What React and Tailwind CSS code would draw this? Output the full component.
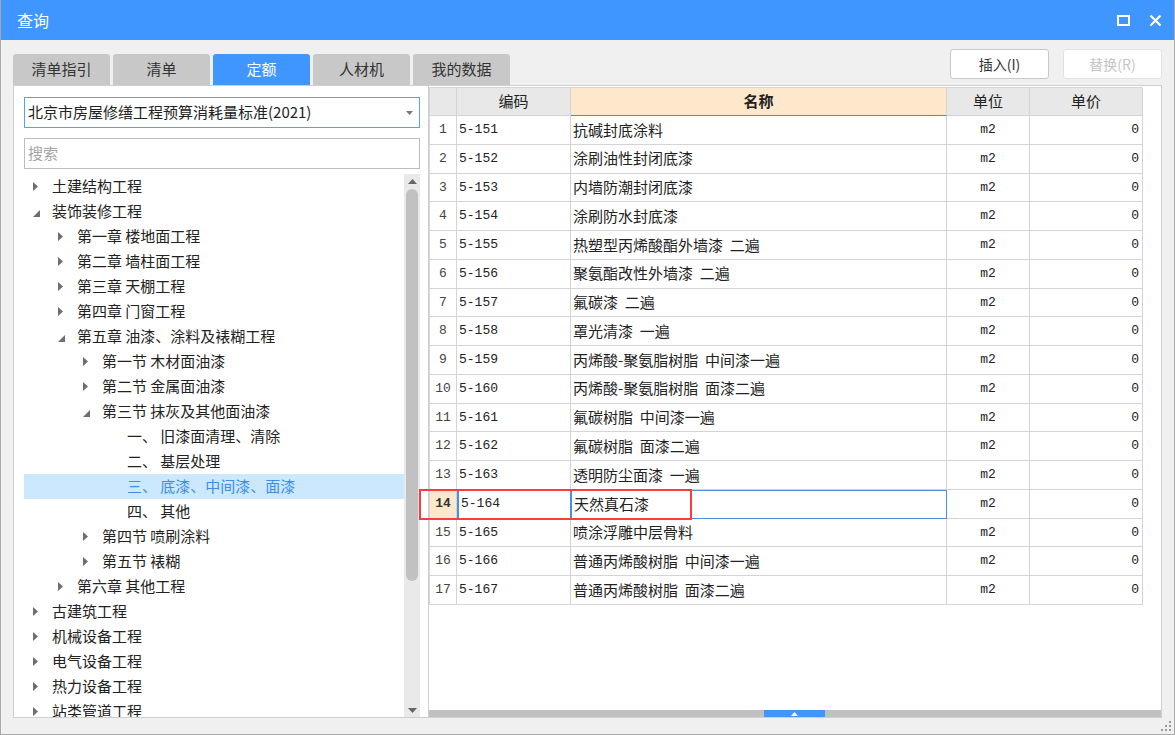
import React from 'react';

const FONT = { fontFamily: '"Microsoft YaHei", "Noto Sans CJK SC", "Noto Sans", sans-serif' };
const MONO = { fontFamily: '"Liberation Mono", "DejaVu Sans Mono", "Noto Sans CJK SC", monospace' };

const tabs = ['清单指引', '清单', '定额', '人材机', '我的数据'];

// [level, label, state]  state: 'c' collapsed, 'e' expanded, 'l' leaf
const tree = [
  [0, '土建结构工程', 'c'],
  [0, '装饰装修工程', 'e'],
  [1, '第一章 楼地面工程', 'c'],
  [1, '第二章 墙柱面工程', 'c'],
  [1, '第三章 天棚工程', 'c'],
  [1, '第四章 门窗工程', 'c'],
  [1, '第五章 油漆、涂料及裱糊工程', 'e'],
  [2, '第一节 木材面油漆', 'c'],
  [2, '第二节 金属面油漆', 'c'],
  [2, '第三节 抹灰及其他面油漆', 'e'],
  [3, '一、 旧漆面清理、清除', 'l'],
  [3, '二、 基层处理', 'l'],
  [3, '三、 底漆、中间漆、面漆', 'l', true],
  [3, '四、 其他', 'l'],
  [2, '第四节 喷刷涂料', 'c'],
  [2, '第五节 裱糊', 'c'],
  [1, '第六章 其他工程', 'c'],
  [0, '古建筑工程', 'c'],
  [0, '机械设备工程', 'c'],
  [0, '电气设备工程', 'c'],
  [0, '热力设备工程', 'c'],
  [0, '站类管道工程', 'c'],
];

const rows = [
  ['5-151', '抗碱封底涂料'],
  ['5-152', '涂刷油性封闭底漆'],
  ['5-153', '内墙防潮封闭底漆'],
  ['5-154', '涂刷防水封底漆'],
  ['5-155', '热塑型丙烯酸酯外墙漆  二遍'],
  ['5-156', '聚氨酯改性外墙漆  二遍'],
  ['5-157', '氟碳漆  二遍'],
  ['5-158', '罩光清漆  一遍'],
  ['5-159', '丙烯酸-聚氨脂树脂  中间漆一遍'],
  ['5-160', '丙烯酸-聚氨脂树脂  面漆二遍'],
  ['5-161', '氟碳树脂  中间漆一遍'],
  ['5-162', '氟碳树脂  面漆二遍'],
  ['5-163', '透明防尘面漆  一遍'],
  ['5-164', '天然真石漆'],
  ['5-165', '喷涂浮雕中层骨料'],
  ['5-166', '普通丙烯酸树脂  中间漆一遍'],
  ['5-167', '普通丙烯酸树脂  面漆二遍'],
];

const indent = ['pl-[9px]', 'pl-[34px]', 'pl-[59px]', 'pl-[84px]'];

function Arrow({ state }) {
  if (state === 'c') {
    return (
      <svg width="5" height="9" viewBox="0 0 5 9" className="mr-[14px]">
        <polygon points="0,0 5,4.5 0,9" fill="#6e6e6e" />
      </svg>
    );
  }
  if (state === 'e') {
    return (
      <svg width="7" height="7" viewBox="0 0 7 7" className="mr-[12px] mt-[4px]">
        <polygon points="7,0 7,7 0,7" fill="#6e6e6e" />
      </svg>
    );
  }
  return <span className="w-[19px]" />;
}

const grid = 'grid grid-cols-[27px_114px_376px_83px_113px]';

export default function App() {
  return (
    <div className="w-[1175px] h-[735px] bg-[#f0f0f0] border-x border-b border-[#a9a9a9] flex flex-col relative overflow-hidden" style={FONT}>
      {/* title bar */}
      <div className="h-[40px] bg-[#4096ff] flex items-center justify-between pl-[16px] pr-[12px] text-white text-[16px] shrink-0">
        <span>查询</span>
        <div className="flex items-center gap-[19px]">
          <svg width="13" height="11" viewBox="0 0 13 11">
            <rect x="1" y="1" width="11" height="9" fill="none" stroke="#fff" strokeWidth="2" />
          </svg>
          <svg width="13" height="13" viewBox="0 0 13 13">
            <path d="M1.5 1.5l10 10M11.5 1.5l-10 10" stroke="#fff" strokeWidth="2.2" />
          </svg>
        </div>
      </div>

      {/* tabs + buttons */}
      <div className="h-[45px] flex justify-between pl-[12px] pr-[12px] shrink-0">
        <div className="flex items-end gap-[3px]">
          {tabs.map((t) => (
            <div
              key={t}
              className={
                'w-[97px] h-[31px] rounded-t-[3px] flex items-center justify-center text-[15px] ' +
                (t === '定额' ? 'bg-[#4096ff] text-white' : 'bg-[#c8c8c8] text-[#333]')
              }
            >
              {t}
            </div>
          ))}
        </div>
        <div className="flex items-start gap-[14px] pt-[9px]">
          <div className="w-[99px] h-[30px] bg-white border border-[#c8c8c8] rounded-[3px] flex items-center justify-center text-[14px] text-[#333]">
            插入(I)
          </div>
          <div className="w-[99px] h-[30px] bg-white border border-[#e2e2e2] rounded-[3px] flex items-center justify-center text-[14px] text-[#c4c4c4]">
            替换(R)
          </div>
        </div>
      </div>

      {/* main panel */}
      <div className="ml-[12px] mr-[12px] h-[633px] bg-white border border-[#cfcfcf] flex shrink-0">
        {/* left */}
        <div className="w-[415px] border-r border-[#cfcfcf] flex flex-col pl-[10px] pt-[11px]">
          <div className="w-[396px] h-[31px] border border-[#5a9ff0] flex items-center justify-between pl-[3px] pr-[6px] text-[15px] text-[#222]">
            <span>北京市房屋修缮工程预算消耗量标准(2021)</span>
            <svg width="7" height="4" viewBox="0 0 7 4">
              <polygon points="0,0 7,0 3.5,4" fill="#777" />
            </svg>
          </div>
          <div className="w-[396px] h-[31px] mt-[10px] border border-[#bdbdbd] flex items-center pl-[3px] text-[15px] text-[#a5a5a5]">
            搜索
          </div>
          <div className="w-[396px] flex-1 mt-[5px] flex overflow-hidden">
            <div className="flex-1 overflow-hidden">
              {tree.map(([lvl, label, state, sel], i) => (
                <div
                  key={i}
                  className={
                    'h-[25px] flex items-center text-[15px] whitespace-pre ' +
                    indent[lvl] +
                    (sel ? ' bg-[#cce8ff] text-[#3a8ee6]' : ' text-[#222]')
                  }
                >
                  <Arrow state={state} />
                  <span>{label}</span>
                </div>
              ))}
            </div>
            <div className="w-[16px] bg-[#e9e9e9] flex flex-col items-center pt-[5px] pb-[4px]">
              <svg width="9" height="5" viewBox="0 0 9 5">
                <polygon points="0,5 9,5 4.5,0" fill="#666" />
              </svg>
              <div className="w-[12px] h-[392px] mt-[5px] bg-[#c1c1c1] rounded-full" />
              <div className="flex-1" />
              <svg width="9" height="5" viewBox="0 0 9 5">
                <polygon points="0,0 9,0 4.5,5" fill="#666" />
              </svg>
            </div>
          </div>
        </div>

        {/* right */}
        <div className="flex-1 flex flex-col pt-[1px]">
          <div className="w-[713px] border-l border-t border-[#d4d4d4]">
            <div className={grid + ' h-[28px] text-[15px] text-[#222]'}>
              <div className="bg-[#e8e8e8] border-r border-b border-[#d4d4d4]" />
              <div className="bg-[#e8e8e8] border-r border-b border-[#d4d4d4] flex items-center justify-center">编码</div>
              <div className="bg-[#fde8cb] border-r border-b border-b-[#3d8ef0] border-r-[#d4d4d4] flex items-center justify-center font-bold">名称</div>
              <div className="bg-[#e8e8e8] border-r border-b border-[#d4d4d4] flex items-center justify-center">单位</div>
              <div className="bg-[#e8e8e8] border-r border-b border-[#d4d4d4] flex items-center justify-center">单价</div>
            </div>
            {rows.map(([code, name], i) => {
              const cur = i === 13;
              return (
                <div key={code} className={grid + ' h-[28.75px]'}>
                  <div
                    className={
                      'border-r border-b border-[#d4d4d4] flex items-center justify-center text-[13px] ' +
                      (cur ? 'bg-[#fde8cb] font-bold text-[#333]' : 'text-[#444]')
                    }
                    style={MONO}
                  >
                    {i + 1}
                  </div>
                  <div
                    className={
                      'border-b border-[#d4d4d4] flex items-center pl-[2px] text-[13px] text-[#222] ' +
                      (cur ? 'border-l-2 border-l-[#4a90e2] border-r border-r-[#4a90e2] pl-[1px]' : 'border-r')
                    }
                    style={MONO}
                  >
                    {code}
                  </div>
                  <div
                    className={
                      'flex items-center pl-[2px] text-[15px] text-[#222] whitespace-pre ' +
                      (cur ? 'border border-[#4a90e2]' : 'border-r border-b border-[#d4d4d4]')
                    }
                  >
                    {name}
                  </div>
                  <div className="border-r border-b border-[#d4d4d4] flex items-center justify-center text-[13px] text-[#222]" style={MONO}>
                    m2
                  </div>
                  <div className="border-r border-b border-[#d4d4d4] flex items-center justify-end pr-[3px] text-[13px] text-[#222]" style={MONO}>
                    0
                  </div>
                </div>
              );
            })}
          </div>
          <div className="flex-1" />
          <div className="h-[7px] bg-[#c0c0c0] flex">
            <div className="w-[335px]" />
            <div className="w-[61px] bg-[#4096ff] flex items-center justify-center">
              <svg width="7" height="4" viewBox="0 0 7 4">
                <polygon points="0,4 7,4 3.5,0" fill="#fff" />
              </svg>
            </div>
          </div>
        </div>
      </div>

      {/* resize grip */}
      <div className="flex-1 flex justify-end items-end pr-[3px] pb-[3px]">
        <svg width="11" height="11" viewBox="0 0 11 11">
          {[[9, 1], [9, 5], [5, 5], [9, 9], [5, 9], [1, 9]].map(([x, y]) => (
            <rect key={x + '-' + y} x={x} y={y} width="2" height="2" fill="#9a9a9a" />
          ))}
        </svg>
      </div>

      {/* highlight box */}
      <div className="absolute left-[418px] top-[489px] w-[273px] h-[31px] border-2 border-[#ff3b3b] pointer-events-none" />
    </div>
  );
}
